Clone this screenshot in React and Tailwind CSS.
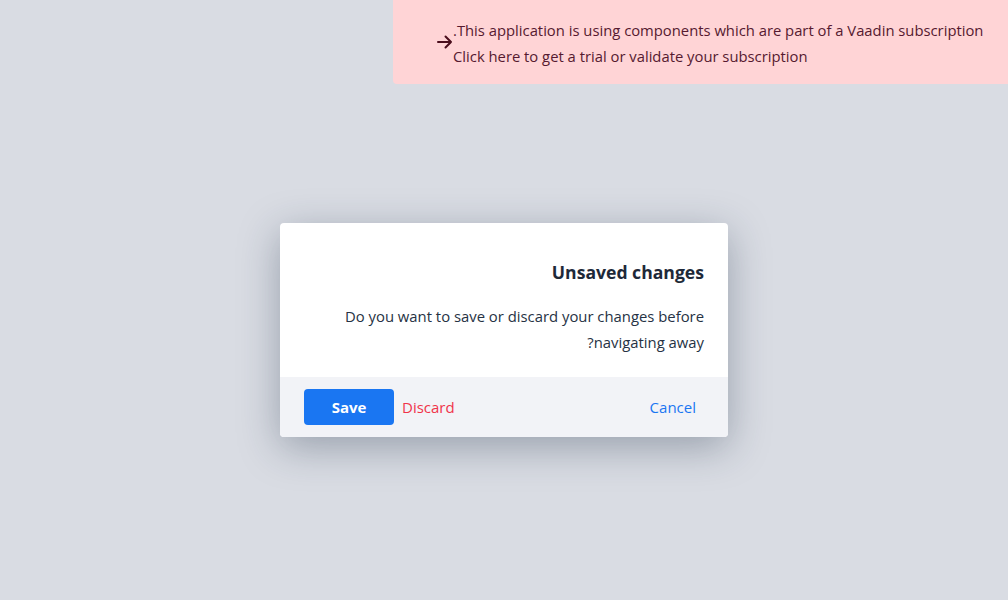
export default function App() {
  return (
    <div className="relative w-[1008px] h-[600px] overflow-hidden bg-[#d9dce3] font-['Open_Sans',sans-serif]">
      {/* Subscription banner */}
      <div className="absolute right-0 top-0 w-[615px] h-[84px] bg-[#ffd4d6] rounded-bl-[4px] flex items-start pl-[44px] pt-[17px]">
        <svg className="mt-[18px] shrink-0" width="16" height="14" viewBox="0 0 16 14" fill="none">
          <path d="M1 7h13M8.5 1.5L14 7l-5.5 5.5" stroke="#4a0d1c" strokeWidth="2" strokeLinecap="round" strokeLinejoin="round" />
        </svg>
        <div className="text-[14.8px] leading-[26px] text-[#561a30]">
          <div>.This application is using components which are part of a Vaadin subscription</div>
          <div>Click here to get a trial or validate your subscription</div>
        </div>
      </div>

      {/* Dialog */}
      <div className="absolute left-[280px] top-[223px] w-[448px] bg-white rounded-[4px] overflow-hidden shadow-[0_10px_40px_rgba(30,45,70,0.35)]">
        <div className="px-6 pt-[35px] pb-[22px] text-right">
          <h2 className="text-[17.6px] font-bold text-[#1e2939] leading-[28px]">Unsaved changes</h2>
          <p className="mt-[17px] text-[14.85px] leading-[26px] text-[#263244]">
            Do you want to save or discard your changes before
            <br />
            ?navigating away
          </p>
        </div>
        <div className="h-[60px] bg-[#f2f3f7] flex items-center px-6">
          <button className="w-[90px] h-[36px] rounded-[4px] bg-[#1a76f2] text-white font-bold text-[15px]">Save</button>
          <button className="ml-2 text-[15px] text-[#f0334a]">Discard</button>
          <button className="ml-auto mr-2 text-[15px] text-[#1a76f2]">Cancel</button>
        </div>
      </div>
    </div>
  )
}
